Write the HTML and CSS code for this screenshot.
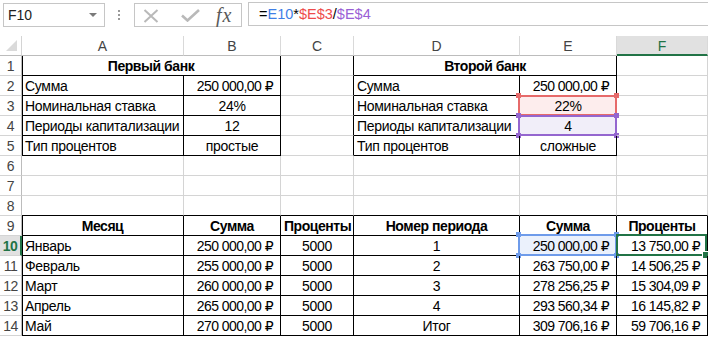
FILE: index.html
```html
<!DOCTYPE html>
<html lang="ru">
<head>
<meta charset="utf-8">
<title>Excel</title>
<link rel="stylesheet" href="styles.css">
</head>
<body>
<div class="toolbar">
  <div class="namebox"><span class="nb-text">F10</span><span class="nb-arrow"></span></div>
  <div class="dots"><i></i><i></i><i></i></div>
  <div class="btns">
    <svg class="ic-x" width="16" height="14" viewBox="0 0 16 14"><path d="M1.5 1 L14.5 13 M14.5 1 L1.5 13" stroke="#b9b9b9" stroke-width="2" fill="none"/></svg>
    <svg class="ic-ok" width="19" height="13" viewBox="0 0 19 13"><path d="M1 6.5 L6.5 11.5 L18 1" stroke="#b9b9b9" stroke-width="2.6" fill="none"/></svg>
    <span class="fx"><i>f</i><i>x</i></span>
  </div>
  <div class="formula">=<span class="f-blue">E10</span>*<span class="f-red">$E$3</span>/<span class="f-purple">$E$4</span></div>
</div>

<div class="sheet">
  <div class="corner"><span class="tri"></span></div>
  <div class="ch">A</div>
  <div class="ch">B</div>
  <div class="ch">C</div>
  <div class="ch">D</div>
  <div class="ch">E</div>
  <div class="ch ch-sel">F</div>

  <div class="rh">1</div>
  <div class="c span2 bl br bb b ctr">Первый банк</div>
  <div class="c br"></div>
  <div class="c span2 br bb b ctr">Второй банк</div>
  <div class="c"></div>

  <div class="rh">2</div>
  <div class="c bl br bb">Сумма</div>
  <div class="c br bb num">250 000,00 ₽</div>
  <div class="c br"></div>
  <div class="c br bb">Сумма</div>
  <div class="c br bb num">250 000,00 ₽</div>
  <div class="c"></div>

  <div class="rh">3</div>
  <div class="c bl br bb">Номинальная ставка</div>
  <div class="c br bb ctr">24%</div>
  <div class="c br"></div>
  <div class="c br bb">Номинальная ставка</div>
  <div class="c br bb ctr fill-red">22%<span class="sel sel-red"><i class="h tl"></i><i class="h tr"></i><i class="h bl2"></i><i class="h br2"></i></span></div>
  <div class="c"></div>

  <div class="rh">4</div>
  <div class="c bl br bb">Периоды капитализации</div>
  <div class="c br bb ctr">12</div>
  <div class="c br"></div>
  <div class="c br bb">Периоды капитализации</div>
  <div class="c br bb ctr fill-purple">4<span class="sel sel-purple"><i class="h tl"></i><i class="h tr"></i><i class="h bl2"></i><i class="h br2"></i></span></div>
  <div class="c"></div>

  <div class="rh">5</div>
  <div class="c bl br bb">Тип процентов</div>
  <div class="c br bb ctr">простые</div>
  <div class="c br"></div>
  <div class="c br bb">Тип процентов</div>
  <div class="c br bb ctr">сложные</div>
  <div class="c"></div>

  <div class="rh">6</div>
  <div class="c"></div><div class="c"></div><div class="c"></div><div class="c"></div><div class="c"></div><div class="c"></div>

  <div class="rh">7</div>
  <div class="c"></div><div class="c"></div><div class="c"></div><div class="c"></div><div class="c"></div><div class="c"></div>

  <div class="rh">8</div>
  <div class="c bb"></div><div class="c bb"></div><div class="c bb"></div><div class="c bb"></div><div class="c bb"></div><div class="c bb"></div>

  <div class="rh">9</div>
  <div class="c bl br bb b ctr">Месяц</div>
  <div class="c br bb b ctr">Сумма</div>
  <div class="c br bb b ctr">Проценты</div>
  <div class="c br bb b ctr">Номер периода</div>
  <div class="c br bb b ctr">Сумма</div>
  <div class="c br bb b ctr">Проценты</div>

  <div class="rh rh-sel">10</div>
  <div class="c bl br bb">Январь</div>
  <div class="c br bb num">250 000,00 ₽</div>
  <div class="c br bb ctr">5000</div>
  <div class="c br bb ctr">1</div>
  <div class="c br bb num fill-blue">250 000,00 ₽<span class="sel sel-blue"><i class="h tl"></i><i class="h tr"></i><i class="h bl2"></i><i class="h br2"></i></span></div>
  <div class="c br bb num">13 750,00 ₽<span class="active"><i class="handle"></i></span></div>

  <div class="rh">11</div>
  <div class="c bl br bb">Февраль</div>
  <div class="c br bb num">255 000,00 ₽</div>
  <div class="c br bb ctr">5000</div>
  <div class="c br bb ctr">2</div>
  <div class="c br bb num">263 750,00 ₽</div>
  <div class="c br bb num">14 506,25 ₽</div>

  <div class="rh">12</div>
  <div class="c bl br bb">Март</div>
  <div class="c br bb num">260 000,00 ₽</div>
  <div class="c br bb ctr">5000</div>
  <div class="c br bb ctr">3</div>
  <div class="c br bb num">278 256,25 ₽</div>
  <div class="c br bb num">15 304,09 ₽</div>

  <div class="rh">13</div>
  <div class="c bl br bb">Апрель</div>
  <div class="c br bb num">265 000,00 ₽</div>
  <div class="c br bb ctr">5000</div>
  <div class="c br bb ctr">4</div>
  <div class="c br bb num">293 560,34 ₽</div>
  <div class="c br bb num">16 145,82 ₽</div>

  <div class="rh">14</div>
  <div class="c bl br bb">Май</div>
  <div class="c br bb num">270 000,00 ₽</div>
  <div class="c br bb ctr">5000</div>
  <div class="c br bb ctr">Итог</div>
  <div class="c br bb num">309 706,16 ₽</div>
  <div class="c br bb num">59 706,16 ₽</div>
</div>
</body>
</html>
```

FILE: styles.css
```css
* { box-sizing: border-box; }
html, body { margin: 0; padding: 0; }
body {
  width: 708px;
  height: 337px;
  overflow: hidden;
  background: #fff;
  font-family: "Liberation Sans", Arial, "DejaVu Sans", sans-serif;
  font-size: 14px;
  color: #000;
}

/* ---------- toolbar ---------- */
.toolbar {
  height: 36px;
  display: flex;
  align-items: flex-start;
  padding-top: 3px;
}
.namebox {
  margin-left: 3px;
  width: 102px;
  height: 24px;
  border: 1px solid #c6c6c6;
  display: flex;
  align-items: center;
  justify-content: space-between;
  padding: 0 7px 0 4px;
  color: #222;
  font-size: 14px;
}
.nb-arrow {
  width: 0; height: 0;
  border-left: 4px solid transparent;
  border-right: 4px solid transparent;
  border-top: 4px solid #7a7a7a;
}
.dots {
  margin-left: 12px;
  width: 4px;
  height: 24px;
  display: flex;
  flex-direction: column;
  align-items: center;
  justify-content: center;
  gap: 2px;
}
.dots i {
  display: block;
  width: 2px;
  height: 2px;
  background: #9a9a9a;
}
.btns {
  margin-left: 13px;
  width: 108px;
  height: 24px;
  border: 1px solid #c6c6c6;
  display: flex;
  align-items: center;
  padding-left: 8px;
}
.ic-x { margin-top: 1px; }
.ic-ok { margin-left: 22px; margin-top: 1px; }
.fx {
  margin-left: 16px;
  font-family: "Liberation Serif", "DejaVu Serif", serif;
  font-size: 20px;
  color: #5a5a5a;
  line-height: 20px;
}
.fx i { font-style: italic; }
.fx i + i { margin-left: 1px; }
.formula {
  margin-left: 6px;
  flex: 1;
  height: 24px;
  margin-top: -1px;
  border: 1px solid #c6c6c6;
  border-right: none;
  padding-left: 10px;
  line-height: 22px;
  font-size: 14.5px;
  color: #000;
}
.f-blue { color: #3f7fe6; }
.f-red { color: #ee4b4b; }
.f-purple { color: #9a5fd6; }

/* ---------- sheet ---------- */
.sheet {
  display: grid;
  grid-template-columns: 22px 162px 97px 73px 166px 97px 91px;
  grid-template-rows: repeat(15, 20px);
}
.corner {
  position: relative;
  border-right: 1px solid #d4d4d4;
  border-bottom: 1px solid #bcbcbc;
}
.tri {
  position: absolute;
  right: 4px;
  bottom: 4px;
  width: 0; height: 0;
  border-left: 11px solid transparent;
  border-bottom: 11px solid #dadada;
}
.ch {
  border-right: 1px solid #d9d9d9;
  border-bottom: 1px solid #bcbcbc;
  text-align: center;
  color: #444;
  line-height: 20px;
  font-size: 14px;
}
.ch-sel {
  background: #e1e1e1;
  color: #217346;
  border-bottom: 2px solid #217346;
}
.rh {
  border-right: 1px solid #bcbcbc;
  border-bottom: 1px solid #d4d4d4;
  text-align: center;
  color: #444;
  line-height: 20px;
  font-size: 14px;
  letter-spacing: -0.5px;
}
.rh-sel {
  background: #e1e1e1;
  color: #217346;
  border-right: 2px solid #217346;
  font-weight: bold;
}
.c {
  position: relative;
  border-right: 1px solid #d4d4d4;
  border-bottom: 1px solid #d4d4d4;
  line-height: 20px;
  padding: 0 3px;
  white-space: nowrap;
  letter-spacing: -0.3px;
}
.span2 { grid-column: span 2; }
.bl { border-left: 1px solid #000; padding-left: 2px; }
.br { border-right-color: #000; }
.bb { border-bottom-color: #000; }
.b { font-weight: bold; letter-spacing: -0.45px; }
.ctr { text-align: center; }
.num {
  text-align: right;
  padding-right: 7px;
  letter-spacing: -0.55px;
}
.fill-red { background: #fdeded; }
.fill-purple { background: #f1eef9; }
.fill-blue { background: #ebf1fc; }

/* range highlights */
.sel {
  position: absolute;
  left: -2px;
  top: -1px;
  right: -1px;
  bottom: -1px;
  border: 2px solid;
}
.sel-red { border-color: #e66a6a; color: #e66a6a; }
.sel-purple { border-color: #9466cf; color: #9466cf; }
.sel-blue { border-color: #6e9bea; color: #6e9bea; top: -2px; }
.h {
  position: absolute;
  width: 5px;
  height: 5px;
  background: currentColor;
}
.tl { left: -4px; top: -4px; }
.tr { right: -4px; top: -4px; }
.bl2 { left: -4px; bottom: -4px; }
.br2 { right: -4px; bottom: -4px; }

.active {
  position: absolute;
  left: -1px;
  top: -2px;
  right: 0;
  bottom: -1px;
  border: 2px solid #217346;
}
.handle {
  position: absolute;
  right: -4px;
  bottom: -4px;
  width: 6px;
  height: 6px;
  background: #217346;
  outline: 1px solid #fff;
}
```
